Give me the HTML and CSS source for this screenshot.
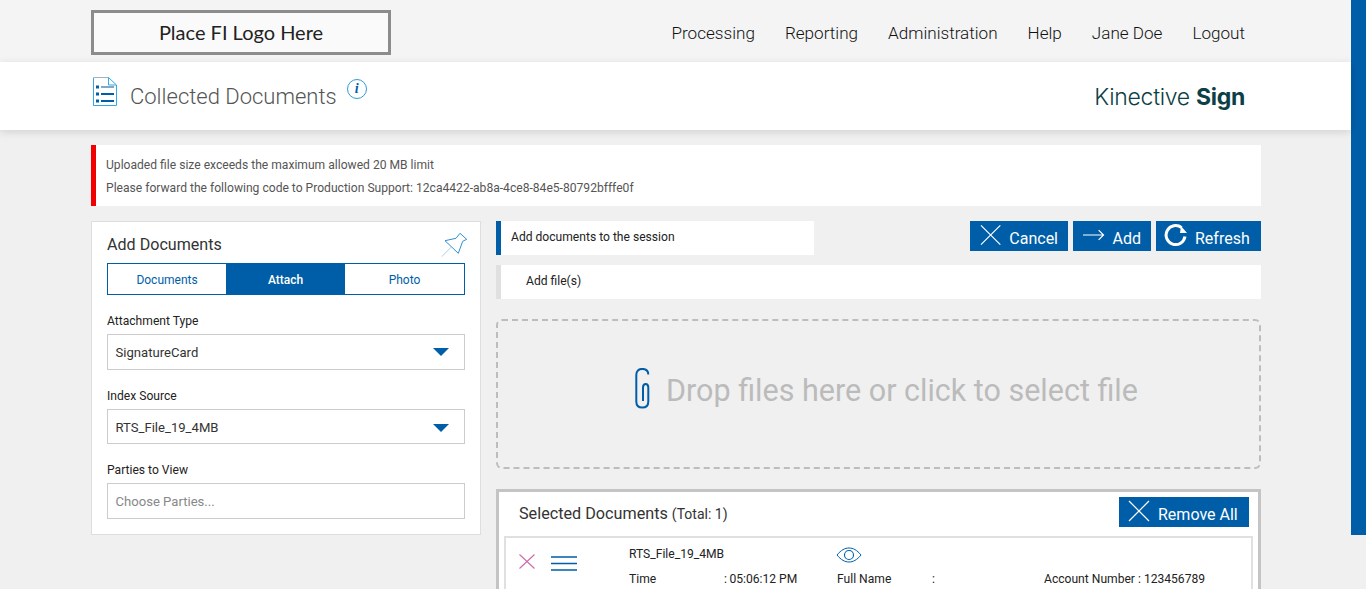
FILE: index.html
```html
<!DOCTYPE html>
<html lang="en">
<head>
<meta charset="utf-8">
<title>Collected Documents</title>
<link rel="stylesheet" href="styles.css">
</head>
<body>
<div class="sidebar-strip"></div>
<div class="page">
  <header class="topbar">
    <div class="container topbar-inner">
      <div class="logo-box">Place FI Logo Here</div>
      <nav class="nav">
        <a>Processing</a><a>Reporting</a><a>Administration</a><a>Help</a><a>Jane Doe</a><a>Logout</a>
      </nav>
    </div>
  </header>
  <div class="titlebar">
    <div class="container titlebar-inner">
      <div class="title-left">
        <svg class="doc-icon" width="24" height="30" viewBox="0 0 24 30" fill="none">
          <path d="M.5 29V.5H15.500" stroke="#9fb4c2" stroke-width="1"/>
          <path d="M.5 1V28.500H23.500V8L15.500 .5V8H23.500" stroke="#35a8e6" stroke-width="1"/>
          <path d="M8 10H21" stroke="#7fa9c9" stroke-width="2"/>
          <path d="M8 17H21M8 24H21" stroke="#005ea8" stroke-width="2"/>
          <path d="M3 8.500H6V11.500H3ZM3 15.500H6V18.500H3ZM3 22.500H6V25.500H3Z" fill="#005ea8"/>
        </svg>
        <h1 class="page-title">Collected Documents</h1>
        <span class="info-icon">i</span>
      </div>
      <div class="brand">Kinective <b>Sign</b></div>
    </div>
  </div>
  <main class="container main">
    <div class="alert">
      <p>Uploaded file size exceeds the maximum allowed 20 MB limit</p>
      <p>Please forward the following code to Production Support: 12ca4422-ab8a-4ce8-84e5-80792bfffe0f</p>
    </div>
    <div class="columns">
      <section class="panel">
        <div class="panel-head">
          <h2>Add Documents</h2>
          <svg class="pin" width="28" height="28" viewBox="0 0 28 28" fill="none" stroke="#2f8fd0" stroke-width="1">
            <path d="M20 3.300L26.700 9.300L22.700 11.300L18.300 23.300L5 10.700L16 8.300Z" stroke-linejoin="round"/>
            <path d="M11.700 16.700L1.700 26.700" stroke="#a9cfe9"/>
          </svg>
        </div>
        <div class="tabs">
          <span class="tab">Documents</span><span class="tab tab-active">Attach</span><span class="tab">Photo</span>
        </div>
        <label class="field-label">Attachment Type</label>
        <div class="select">SignatureCard<i class="caret"></i></div>
        <label class="field-label">Index Source</label>
        <div class="select select-short">RTS_File_19_4MB<i class="caret"></i></div>
        <label class="field-label">Parties to View</label>
        <div class="select placeholder">Choose Parties...</div>
      </section>
      <section class="content">
        <div class="action-row">
          <div class="bar bar-active">Add documents to the session</div>
          <div class="buttons">
            <button class="btn btn-cancel"><svg width="22" height="22" viewBox="0 0 22 22" stroke="#fff" stroke-width="1.2"><path d="M1 1L21 21M21 1L1 21"/></svg>Cancel</button>
            <button class="btn btn-add"><svg width="22" height="12" viewBox="0 0 22 12" fill="none" stroke="#fff" stroke-width="1.2"><path d="M0 6H21M16 1L21 6L16 11"/></svg>Add</button>
            <button class="btn btn-refresh"><svg width="24" height="24" viewBox="0 0 24 24" fill="none"><path d="M17.600 4.700A9.500 9.500 0 1 0 21 13.500" stroke="#fff" stroke-width="3"/><path d="M17 3L23 10L16 10Z" fill="#fff"/></svg>Refresh</button>
          </div>
        </div>
        <div class="bar bar-file">Add file(s)</div>
        <div class="dropzone">
          <svg class="clip" width="15" height="41" viewBox="0 0 15 41" fill="none" stroke="#005ea8" stroke-width="2"><path d="M13.300 6.500C13.300 3 11 .9 7.300 .9C3.600 .9 1.300 3 1.300 7V33.500C1.300 37.500 3.600 39.600 7.300 39.600C11 39.600 13.300 37.500 13.300 33.500V19.500C13.300 17.500 12.200 16 10.700 16C9.200 16 8 17.500 8 19.500V33"/></svg>
          <span>Drop files here or click to select file</span>
        </div>
        <div class="selected">
          <div class="selected-head">
            <h2>Selected Documents <small>(Total: 1)</small></h2>
            <button class="btn btn-remove"><svg width="22" height="22" viewBox="0 0 22 22" stroke="#fff" stroke-width="1.2"><path d="M1 1L21 21M21 1L1 21"/></svg>Remove All</button>
          </div>
          <div class="doc-card">
            <div class="doc-tools">
              <svg width="16" height="15" viewBox="0 0 16 15" stroke="#cf6aa8" stroke-width="1.100"><path d="M.5 .5L15.500 14.500M15.500 .5L.5 14.500"/></svg>
              <svg width="26" height="17" viewBox="0 0 26 17" stroke="#005ea8" stroke-width="1.300"><path d="M0 3H26M0 9.500H26M0 16H26"/></svg>
            </div>
            <div class="doc-col doc-col-file">
              <div class="doc-name">RTS_File_19_4MB</div>
              <div class="doc-row"><span class="doc-key">Time</span><span>:&#8201;05:06:12 PM</span></div>
            </div>
            <div class="doc-col doc-col-name">
              <svg class="eye" width="26" height="16" viewBox="0 0 26 16" fill="none" stroke="#005ea8" stroke-width="1"><path d="M1 8C5 3 9 1 13 1C17 1 21 3 25 8C21 13 17 15 13 15C9 15 5 13 1 8Z"/><circle cx="13" cy="8" r="4.500" stroke-width="1.100"/></svg>
              <div class="doc-row"><span class="doc-key">Full Name</span><span>:</span></div>
            </div>
            <div class="doc-col doc-col-acct">
              <div class="doc-row">Account Number : 123456789</div>
            </div>
          </div>
        </div>
      </section>
    </div>
  </main>
</div>
</body>
</html>
```
FILE: styles.css
```css
* { box-sizing: border-box; }
html, body { margin: 0; height: 589px; overflow: hidden; }
body { background: #f0f0f0; font-family: Roboto, "Liberation Sans", sans-serif; color: #222; position: relative; }
h1, h2, p { margin: 0; font-weight: 400; }

.sidebar-strip { position: absolute; top: 0; right: 0; width: 15px; height: 535px; background: #005ea8; }
.page { width: 1351px; }
.container { width: 1170px; margin-left: 91px; }

.topbar { height: 62px; background: #f4f4f4; }
.topbar-inner { display: flex; justify-content: space-between; padding-top: 10px; padding-right: 16px; }
.logo-box { width: 300px; height: 45px; border: 3px solid #8c8c8c; background: #fafafa; display: flex; align-items: center; justify-content: center; padding-bottom: 2px; font: 400 20px Lato, sans-serif; color: #222; }
.nav { display: flex; gap: 30px; font-weight: 300; font-size: 17.100px; color: #111; padding-top: 13px; }

.titlebar { height: 68px; background: #fff; box-shadow: 0 2px 8px rgba(0,0,0,.13); position: relative; }
.titlebar-inner { display: flex; justify-content: space-between; }
.title-left { display: flex; align-items: flex-start; padding: 15px 0 0 2px; }
.page-title { font-size: 22px; font-weight: 300; color: #555; margin: 7px 0 0 13px; }
.info-icon { width: 20px; height: 20px; border: 1px solid #2f9bd6; border-radius: 50%; margin: 2px 0 0 10px; color: #005ea8; font: italic 700 14px/18px "Liberation Serif", serif; text-align: center; }
.brand { font: 300 23px/28px Inter, sans-serif; color: #0d3f47; padding: 21px 16px 0 0; letter-spacing: -.3px; }
.brand b { font-weight: 700; }

.main { padding-top: 15px; }
.alert { height: 61px; background: #fff; border-left: 5px solid #f00000; padding: 13px 0 0 10px; font-size: 12.100px; line-height: 14px; color: #555; }
.alert p + p { margin-top: 9px; }

.columns { display: flex; gap: 15px; align-items: flex-start; margin-top: 15px; }
.panel { width: 390px; height: 314px; background: #fff; border: 1px solid #dedede; padding: 0 15px; }
.panel-head { height: 41px; display: flex; justify-content: space-between; align-items: flex-start; padding-top: 13px; }
.panel-head h2 { font-size: 16.100px; line-height: 19px; color: #333; }
.pin { margin: -5px -3px 0 0; }
.tabs { display: flex; height: 32px; border: 1px solid #005ea8; }
.tab { width: 119px; display: flex; align-items: center; justify-content: center; padding-top: 2px; font-size: 12px; color: #005ea8; }
.tab:first-child { width: 118px; }
.tab-active { background: #005ea8; color: #fff; font-weight: 500; }
.field-label { display: block; font-size: 12.100px; line-height: 14px; color: #222; margin: 19px 0 6px; }
.select { height: 36px; border: 1px solid #ccc; display: flex; align-items: center; justify-content: space-between; padding: 0 15px 0 7.500px; font-size: 13.100px; color: #333; }
.select-short { height: 35px; padding-top: 2px; }
.placeholder { color: #888; }
.caret { width: 0; height: 0; border-left: 8px solid transparent; border-right: 8px solid transparent; border-top: 8px solid #005ea8; }

.content { width: 765px; }
.action-row { display: flex; justify-content: space-between; align-items: flex-start; }
.bar { height: 34px; background: #fff; display: flex; align-items: center; padding-bottom: 2px; font-size: 12.100px; color: #222; }
.bar-active { width: 318px; border-left: 5px solid #005ea8; padding-left: 10px; }
.bar-file { border-left: 5px solid #e0e0e0; padding-left: 25px; margin-top: 10px; }
.buttons { display: flex; gap: 5px; }
.btn { height: 30px; border: 0; background: #005ea8; color: #fff; font: 400 16px Roboto, sans-serif; display: flex; align-items: center; padding: 4px 10px 0; gap: 8px; }
.btn svg { margin-bottom: 6px; }
.btn-cancel { width: 98px; }
.btn-add { width: 78px; }
.btn-refresh { width: 105px; gap: 7px; padding-left: 8px; }
.btn-remove { width: 130px; gap: 8px; padding-left: 9px; }

.dropzone { height: 150px; margin-top: 20px; border: 2px dashed #bdbdbd; border-radius: 6px; display: flex; align-items: center; justify-content: center; gap: 16px; padding: 0 0 8px 16px; font-size: 30.500px; color: #bbb; }
.clip { margin-bottom: 3px; }

.selected { margin-top: 20px; height: 200px; background: #fff; border: 3px solid #c4c4c4; padding: 0 5px; }
.selected-head { height: 44px; display: flex; justify-content: space-between; align-items: flex-start; padding: 5px 4px 0 15px; }
.selected-head h2 { font-size: 16.200px; line-height: 19px; color: #333; padding-top: 7px; }
.selected-head small { font-size: 14px; }
.doc-card { border: 2px solid #e0e0e0; border-bottom: 0; height: 150px; display: flex; font-size: 12.100px; color: #222; }
.doc-tools { width: 123px; display: flex; gap: 16px; padding: 16px 0 0 13px; align-items: flex-start; }
.doc-col { line-height: 14px; }
.doc-col-file { width: 208px; padding-top: 9px; }
.doc-col-name { width: 207px; padding-top: 9px; }
.doc-col-acct { padding-top: 34px; }
.doc-name { height: 25px; }
.doc-row { display: flex; }
.doc-key { width: 95px; }
.eye { display: block; height: 16px; margin: 0 0 9px -1px; }
```
